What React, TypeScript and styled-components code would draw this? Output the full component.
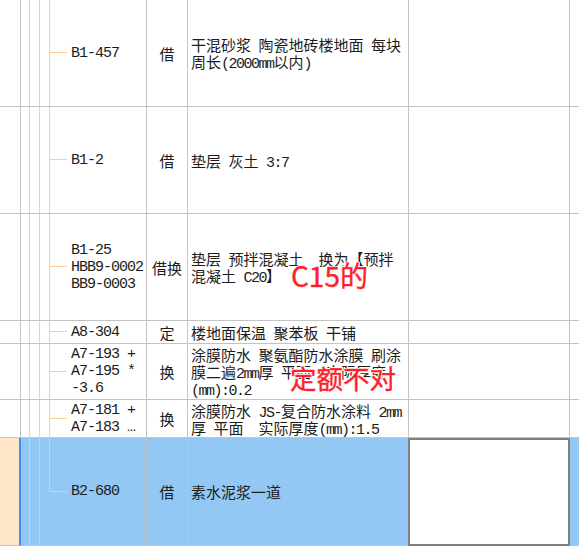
import React from "react";
import styled, { createGlobalStyle, css } from "styled-components";

const GlobalStyle = createGlobalStyle`
  html, body { margin: 0; padding: 0; background: #ffffff; overflow: hidden; }
  body { font-family: "Noto Sans CJK SC", "Noto Sans", sans-serif; color: #1c1c1c; }
`;

const GRID = "#c3c3c3";
const GUIDE = "#ffcf8c";
const GUIDE_SEL = "#e2cfae";
const SEL_BG = "#93c8f5";

const Page = styled.div`
  position: relative;
  width: 579px;
  height: 546px;
  overflow: hidden;
`;

const Table = styled.div`
  display: flex;
  flex-direction: column;
`;

const Row = styled.div<{ $h: number; $sel?: boolean }>`
  display: flex;
  height: ${(p) => p.$h}px;
  background: ${(p) => (p.$sel ? SEL_BG : "#ffffff")};
`;

const cellBase = css`
  box-sizing: border-box;
  height: 100%;
  border-bottom: 1px solid ${GRID};
  border-right: 1px solid ${GRID};
`;

const IndentCell = styled.div<{ $sel?: boolean }>`
  ${cellBase};
  width: 21px;
  flex: none;
  background: ${(p) => (p.$sel ? "#ffe6c9" : "#ffffff")};
  border-right: ${(p) => (p.$sel ? "2px solid #3f8ef3" : `1px solid ${GRID}`)};
`;

const TreeCell = styled.div<{ $sel?: boolean }>`
  ${cellBase};
  width: 126px;
  flex: none;
  display: flex;
  align-items: center;
  background-image: linear-gradient(
    to right,
    transparent 8px,
    ${(p) => (p.$sel ? GUIDE_SEL : GUIDE)} 8px,
    ${(p) => (p.$sel ? GUIDE_SEL : GUIDE)} 9px,
    transparent 9px,
    transparent 18px,
    ${(p) => (p.$sel ? GUIDE_SEL : GUIDE)} 18px,
    ${(p) => (p.$sel ? GUIDE_SEL : GUIDE)} 19px,
    transparent 19px
  );
`;

const Branch = styled.div`
  align-self: stretch;
  width: 18px;
  margin-left: 28px;
  display: grid;
  grid-template-rows: 1fr 1fr;
  flex: none;
`;

const BranchUpper = styled.div<{ $sel?: boolean }>`
  border-left: 1px solid ${(p) => (p.$sel ? GUIDE_SEL : GUIDE)};
  border-bottom: 1px solid ${(p) => (p.$sel ? GUIDE_SEL : GUIDE)};
`;

const BranchLower = styled.div<{ $sel?: boolean; $last?: boolean }>`
  border-left: 1px solid
    ${(p) => (p.$last ? "transparent" : p.$sel ? GUIDE_SEL : GUIDE)};
`;

const Codes = styled.div`
  margin-left: 4px;
  display: flex;
  flex-direction: column;
  font-family: "Liberation Mono", "Noto Sans CJK SC", monospace;
  font-size: 15px;
  letter-spacing: -1px;
  line-height: 17px;
  white-space: pre;
`;

const TypeCell = styled.div`
  ${cellBase};
  width: 41px;
  flex: none;
  display: flex;
  align-items: center;
  justify-content: center;
  font-size: 15px;
  line-height: 17px;
`;

const DescCell = styled.div<{ $sel?: boolean }>`
  ${cellBase};
  width: ${(p) => (p.$sel ? 220 : 221)}px;
  flex: none;
  display: flex;
  flex-direction: column;
  justify-content: center;
  padding-left: 3px;
  font-size: 15px;
  line-height: 17px;
  white-space: pre;
  ${(p) => p.$sel && "border-right: none;"}
`;

const Line = styled.div`
  height: 17px;
`;

const Latin = styled.span`
  font-family: "Liberation Mono", monospace;
  font-size: 15px;
  letter-spacing: -1.5px;
`;

const ExtraCell = styled.div`
  ${cellBase};
  width: 161px;
  flex: none;
`;

const EditCell = styled.div`
  box-sizing: border-box;
  width: 162px;
  height: 100%;
  flex: none;
  background: #ffffff;
  border: 2px solid #808080;
`;

const TailCell = styled.div`
  ${cellBase};
  flex: 1;
  border-right: none;
`;

const Note = styled.div<{ $x: number; $y: number; $size: number }>`
  position: absolute;
  left: ${(p) => p.$x}px;
  top: ${(p) => p.$y}px;
  font-family: "Noto Sans CJK SC", "Noto Sans", sans-serif;
  font-size: ${(p) => p.$size}px;
  line-height: 1;
  color: #ff1f2a;
  white-space: nowrap;
  -webkit-text-stroke: 0.4px #ff1f2a;
  text-shadow: 1px 0 0 #fff, -1px 0 0 #fff, 0 1px 0 #fff, 0 -1px 0 #fff,
    1px 1px 0 #fff, -1px -1px 0 #fff, 1px -1px 0 #fff, -1px 1px 0 #fff;
`;

type RowData = {
  h: number;
  codes: string[];
  type: string;
  desc: string[];
  sel?: boolean;
  last?: boolean;
};

const rows: RowData[] = [
  {
    h: 107,
    codes: ["B1-457"],
    type: "借",
    desc: ["干混砂浆 陶瓷地砖楼地面 每块", "周长(2000mm以内)"],
  },
  { h: 107, codes: ["B1-2"], type: "借", desc: ["垫层 灰土 3:7"] },
  {
    h: 107,
    codes: ["B1-25", "HBB9-0002", "BB9-0003"],
    type: "借换",
    desc: ["垫层 预拌混凝土  换为【预拌", "混凝土 C20】"],
  },
  { h: 23, codes: ["A8-304"], type: "定", desc: ["楼地面保温 聚苯板 干铺"] },
  {
    h: 56,
    codes: ["A7-193 +", "A7-195 *", "-3.6"],
    type: "换",
    desc: ["涂膜防水 聚氨酯防水涂膜 刷涂", "膜二遍2mm厚 平面  实际厚度", "(mm):0.2"],
  },
  {
    h: 38,
    codes: ["A7-181 +", "A7-183 …"],
    type: "换",
    desc: ["涂膜防水 JS-复合防水涂料 2mm", "厚 平面  实际厚度(mm):1.5"],
  },
  {
    h: 108,
    codes: ["B2-680"],
    type: "借",
    desc: ["素水泥浆一道"],
    sel: true,
    last: true,
  },
];

function mixed(text: string) {
  const parts = text.split(/([\u0000-\u00ff\u2026]+)/).filter((s) => s.length);
  return parts.map((p, i) =>
    /^[\u0000-\u00ff\u2026]+$/.test(p) ? <Latin key={i}>{p}</Latin> : <span key={i}>{p}</span>
  );
}

export default function App() {
  return (
    <Page>
      <GlobalStyle />
      <Table>
        {rows.map((r, i) => (
          <Row key={i} $h={r.h} $sel={r.sel}>
            <IndentCell $sel={r.sel} />
            <TreeCell $sel={r.sel}>
              <Branch>
                <BranchUpper $sel={r.sel} />
                <BranchLower $sel={r.sel} $last={r.last} />
              </Branch>
              <Codes>
                {r.codes.map((c, j) => (
                  <Line key={j}>{c}</Line>
                ))}
              </Codes>
            </TreeCell>
            <TypeCell>{r.type}</TypeCell>
            <DescCell $sel={r.sel}>
              {r.desc.map((d, j) => (
                <Line key={j}>{mixed(d)}</Line>
              ))}
            </DescCell>
            {r.sel ? <EditCell /> : <ExtraCell />}
            <TailCell />
          </Row>
        ))}
      </Table>
      <Note $x={291} $y={261} $size={28}>C15的</Note>
      <Note $x={290} $y={365} $size={26.5}>定额不对</Note>
    </Page>
  );
}
